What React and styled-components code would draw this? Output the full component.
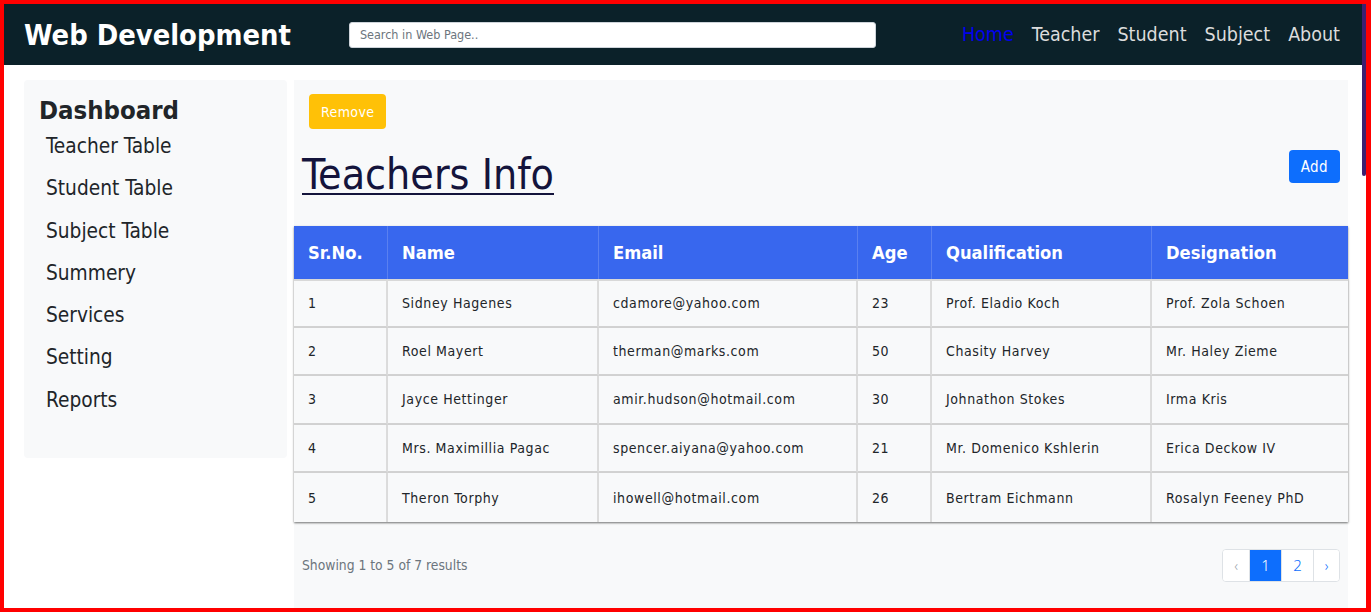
import React from 'react';
import styled, { createGlobalStyle } from 'styled-components';

const GlobalStyle = createGlobalStyle`
    html, body {
        margin: 0;
        padding: 0;
        background: #ffffff;
    }

    * {
        box-sizing: border-box;
    }

    body {
        font-family: "DejaVu Sans Condensed", "DejaVu Sans", sans-serif;
        font-stretch: semi-condensed;
        color: #212529;
    }
`

const Frame = styled.div`
    display: flex;
    height: 100vh;
    border: 4px solid #ff0000;
    border-right-width: 5px;
    overflow: hidden;
`

const Page = styled.div`
    display: flex;
    flex-direction: column;
    flex: 1;
    min-width: 0;
    overflow: hidden;
`

const ScrollTrack = styled.div`
    width: 4px;
    flex-shrink: 0;
    background: #ffffff;
`

const ScrollThumb = styled.div`
    height: 172px;
    border-radius: 0 0 3px 3px;
    background: #3d2070;
`

const Header = styled.header`
    display: flex;
    align-items: center;
    flex-shrink: 0;
    height: 61px;
    padding: 0 22px 0 20px;
    background: #0b2129;
`

const Brand = styled.h1`
    margin: 0;
    font-size: 28.8px;
    font-weight: 700;
    color: #ffffff;
    white-space: nowrap;
`

const Search = styled.input`
    width: 527px;
    height: 26px;
    margin-left: 58px;
    padding: 0 10px;
    border: 1px solid #ced4da;
    border-radius: 3px;
    font-family: inherit;
    font-stretch: inherit;
    font-size: 12.5px;

    &::placeholder {
        color: #6c757d;
    }
`

const Nav = styled.nav`
    display: flex;
    gap: 18px;
    margin-left: auto;
`

const NavLink = styled.a`
    font-size: 19.5px;
    color: ${({ $active }) => ($active ? '#0000ee' : '#dcdcdc')};
    text-decoration: none;
    cursor: pointer;
`

const Layout = styled.div`
    display: grid;
    grid-template-columns: 263px 1fr;
    gap: 7px;
    align-items: start;
    flex: 1;
    padding: 15px 14px 0 20px;
`

const Sidebar = styled.aside`
    padding: 15px 0 37px 15px;
    border-radius: 4px;
    background: #f8f9fa;

    h2 {
        margin: 0;
        font-size: 25.5px;
        font-weight: 700;
        color: #212529;
    }

    ul {
        margin: 0;
        padding: 0 0 0 7px;
        list-style: none;
    }

    li {
        font-size: 20.7px;
        line-height: 42.3px;
        color: #212529;
    }
`

const Main = styled.main`
    display: flex;
    flex-direction: column;
    align-self: stretch;
    background: #f8f9fa;
`

const Button = styled.button`
    height: ${({ $tall }) => ($tall ? '35px' : '33px')};
    padding: 0 12px;
    border: none;
    border-radius: 4px;
    background: ${({ $warning }) => ($warning ? '#ffc107' : '#0d6efd')};
    color: #ffffff;
    font-family: inherit;
    font-stretch: inherit;
    font-size: ${({ $tall }) => ($tall ? '14px' : '15px')};
    letter-spacing: 0.4px;
    cursor: pointer;
`

const Toolbar = styled.div`
    display: flex;
    padding: 14px 15px 0;
`

const TitleRow = styled.div`
    display: flex;
    justify-content: space-between;
    align-items: flex-start;
    margin-top: 21px;
    padding: 0 8px;

    h3 {
        margin: 0;
        font-size: 42.5px;
        font-weight: 500;
        color: #14143c;
        text-decoration: underline;
        text-decoration-thickness: 2px;
        text-underline-offset: 4px;
    }
`

const Table = styled.table`
    width: 100%;
    margin-top: 27px;
    border-collapse: separate;
    border-spacing: 0;
    table-layout: fixed;
    box-shadow: 0 1px 2px rgba(0, 0, 0, 0.5);

    th {
        height: 53px;
        padding: 0 14px;
        background: #3867ee;
        border-right: 1px solid #5a80f0;
        color: #ffffff;
        font-size: 18.2px;
        font-weight: 700;
        text-align: left;
    }

    td {
        height: 48.6px;
        padding: 0 14px;
        border-right: 2px solid #dcdcdc;
        border-bottom: 2px solid #d2d2d2;
        background: #f8f9fa;
        font-size: 14px;
        letter-spacing: 0.6px;
        color: #212529;
        box-shadow: 1px 1px 2px rgba(0, 0, 0, 0.08);
    }

    tr:first-child td {
        border-top: 2px solid #d8d8d8;
    }

    th:last-child, td:last-child {
        border-right: none;
    }

    tr:last-child td {
        border-bottom: none;
    }
`

const Footer = styled.div`
    display: flex;
    justify-content: space-between;
    align-items: center;
    padding: 27px 8px 0;
`

const Summary = styled.p`
    margin: 0;
    font-size: 13.75px;
    color: #6c757d;
`

const Pagination = styled.div`
    display: flex;
    height: 33px;
    border: 1px solid #dee2e6;
    border-radius: 4px;
    overflow: hidden;
    background: #ffffff;
`

const PageItem = styled.span`
    display: flex;
    align-items: center;
    justify-content: center;
    width: ${({ $arrow }) => ($arrow ? '26px' : '32px')};
    border-left: ${({ $first }) => ($first ? 'none' : '1px solid #dee2e6')};
    background: ${({ $active }) => ($active ? '#0d6efd' : '#ffffff')};
    color: ${({ $active, $muted }) => ($active ? '#ffffff' : $muted ? '#9aa3ad' : '#0d6efd')};
    font-family: "Noto Sans", sans-serif;
    font-size: ${({ $arrow }) => ($arrow ? '14px' : '15px')};
    font-weight: 300;
`

const teachers = [
    { id: 1, name: 'Sidney Hagenes', email: 'cdamore@yahoo.com', age: 23, qualification: 'Prof. Eladio Koch', designation: 'Prof. Zola Schoen' },
    { id: 2, name: 'Roel Mayert', email: 'therman@marks.com', age: 50, qualification: 'Chasity Harvey', designation: 'Mr. Haley Zieme' },
    { id: 3, name: 'Jayce Hettinger', email: 'amir.hudson@hotmail.com', age: 30, qualification: 'Johnathon Stokes', designation: 'Irma Kris' },
    { id: 4, name: 'Mrs. Maximillia Pagac', email: 'spencer.aiyana@yahoo.com', age: 21, qualification: 'Mr. Domenico Kshlerin', designation: 'Erica Deckow IV' },
    { id: 5, name: 'Theron Torphy', email: 'ihowell@hotmail.com', age: 26, qualification: 'Bertram Eichmann', designation: 'Rosalyn Feeney PhD' },
];

const columns = [
    { label: 'Sr.No.', width: 94 },
    { label: 'Name', width: 211 },
    { label: 'Email', width: 259 },
    { label: 'Age', width: 74 },
    { label: 'Qualification', width: 220 },
    { label: 'Designation', width: 196 },
];

const links = ['Home', 'Teacher', 'Student', 'Subject', 'About'];
const menu = ['Teacher Table', 'Student Table', 'Subject Table', 'Summery', 'Services', 'Setting', 'Reports'];

export default function App() {
    return (
        <>
            <GlobalStyle />
            <Frame>
                <Page>
                    <Header>
                        <Brand>Web Development</Brand>
                        <Search type="text" placeholder="Search in Web Page.." />
                        <Nav>
                            {links.map((link, i) => (
                                <NavLink key={link} $active={i === 0}>{link}</NavLink>
                            ))}
                        </Nav>
                    </Header>
                    <Layout>
                        <Sidebar>
                            <h2>Dashboard</h2>
                            <ul>
                                {menu.map(item => <li key={item}>{item}</li>)}
                            </ul>
                        </Sidebar>
                        <Main>
                            <Toolbar>
                                <Button $warning $tall>Remove</Button>
                            </Toolbar>
                            <TitleRow>
                                <h3>Teachers Info</h3>
                                <Button>Add</Button>
                            </TitleRow>
                            <Table>
                                <colgroup>
                                    {columns.map(col => <col key={col.label} style={{ width: col.width }} />)}
                                </colgroup>
                                <thead>
                                    <tr>
                                        {columns.map(col => <th key={col.label}>{col.label}</th>)}
                                    </tr>
                                </thead>
                                <tbody>
                                    {teachers.map(t => (
                                        <tr key={t.id}>
                                            <td>{t.id}</td>
                                            <td>{t.name}</td>
                                            <td>{t.email}</td>
                                            <td>{t.age}</td>
                                            <td>{t.qualification}</td>
                                            <td>{t.designation}</td>
                                        </tr>
                                    ))}
                                </tbody>
                            </Table>
                            <Footer>
                                <Summary>Showing 1 to 5 of 7 results</Summary>
                                <Pagination>
                                    <PageItem $arrow $first $muted>‹</PageItem>
                                    <PageItem $active>1</PageItem>
                                    <PageItem>2</PageItem>
                                    <PageItem $arrow>›</PageItem>
                                </Pagination>
                            </Footer>
                        </Main>
                    </Layout>
                </Page>
                <ScrollTrack>
                    <ScrollThumb />
                </ScrollTrack>
            </Frame>
        </>
    )
}
